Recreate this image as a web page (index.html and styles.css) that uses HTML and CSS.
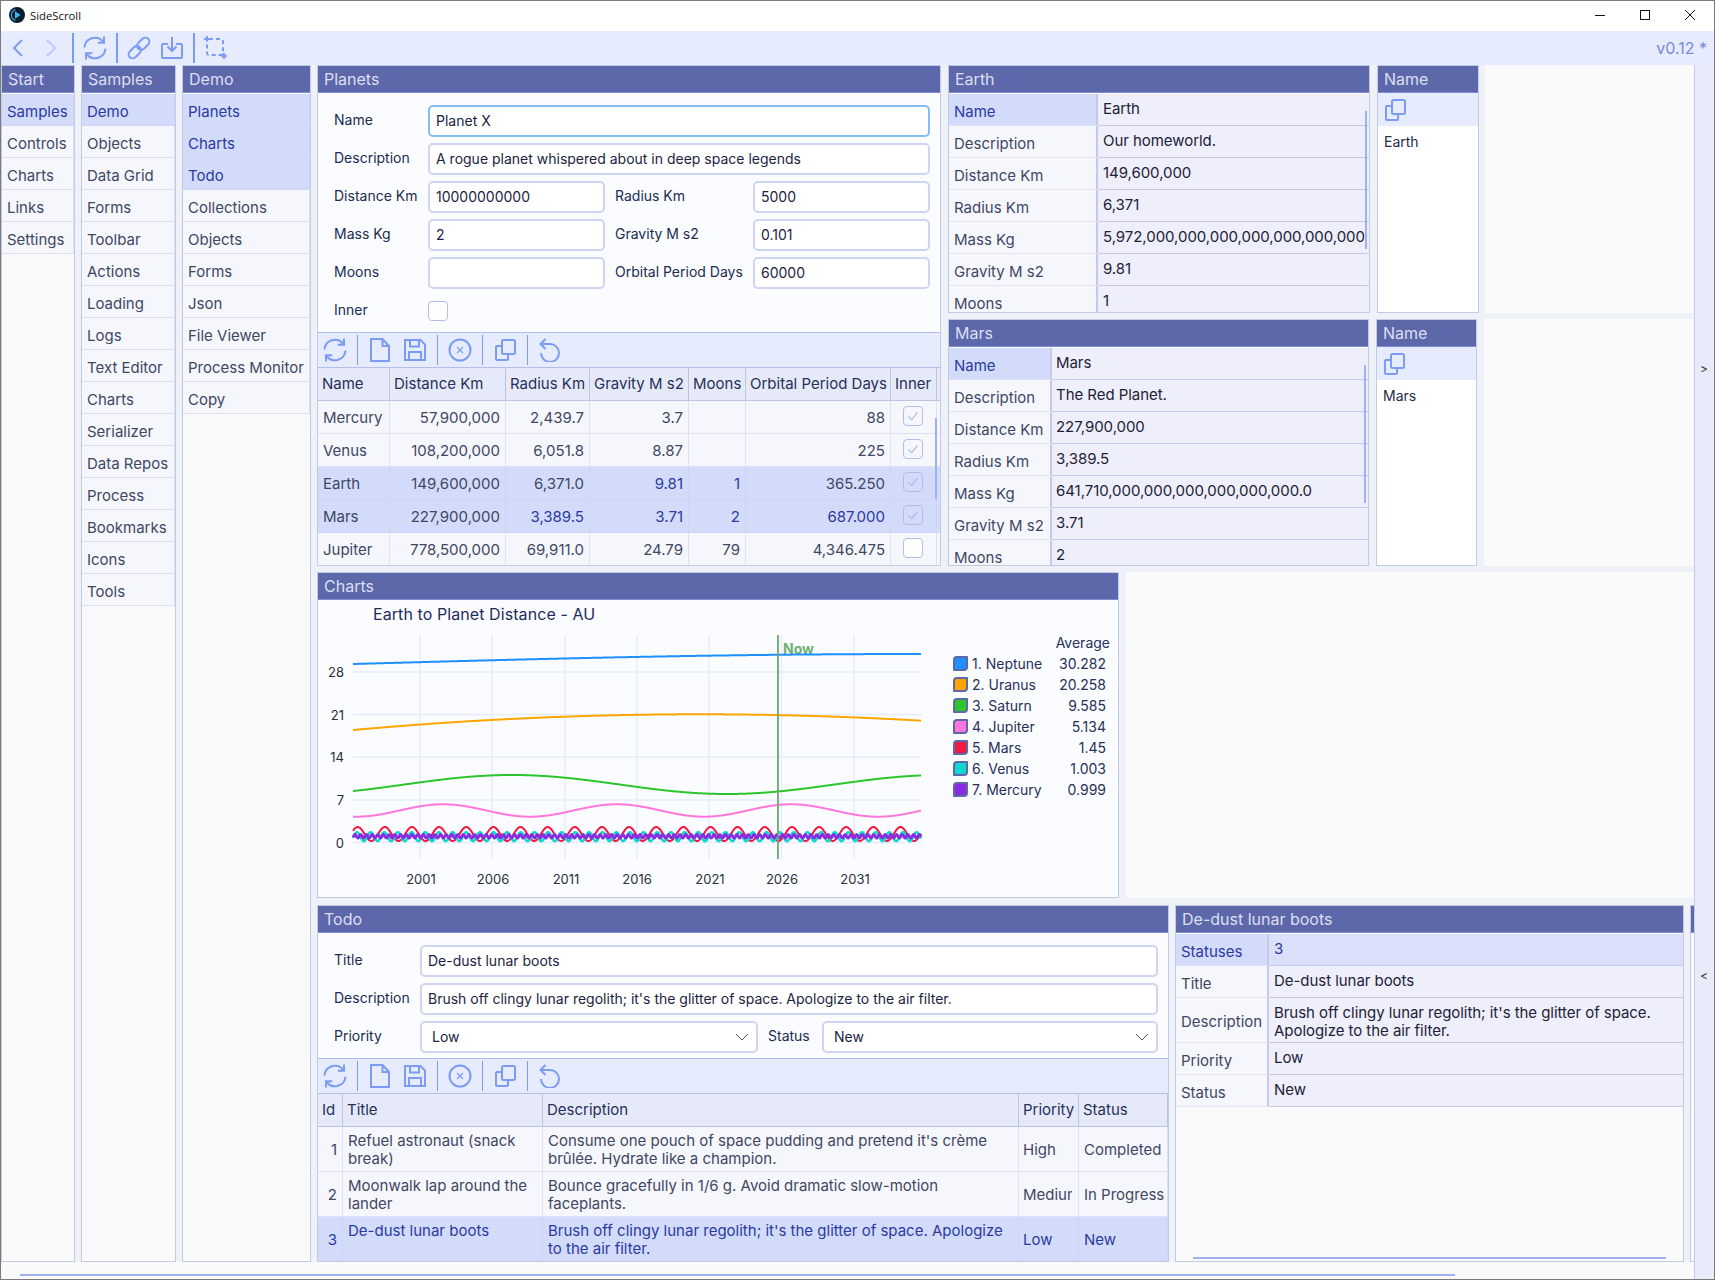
FILE: index.html
```html
<!DOCTYPE html>
<html lang="en">
<head>
<meta charset="utf-8">
<title>SideScroll</title>
<link rel="stylesheet" href="styles.css">
</head>
<body>
<svg class="defs" width="0" height="0" aria-hidden="true">
  <symbol id="i-back" viewBox="0 0 24 24"><path d="M16 4l-8 8 8 8"/></symbol>
  <symbol id="i-fwd" viewBox="0 0 24 24"><path d="M8 4l8 8-8 8"/></symbol>
  <symbol id="i-refresh" viewBox="0 0 24 24"><path d="M1.5 11.5A10.5 10.5 0 0 1 20 5.5M21 .5v6.200h-6.200M22.500 12.500A10.500 10.500 0 0 1 4 18.500M3 23.500v-6.200h6.200"/></symbol>
  <symbol id="i-link" viewBox="0 0 24 24"><g transform="rotate(-45 12 12)"><rect x="-1" y="8" width="14" height="8" rx="4"/><rect x="11" y="8" width="14" height="8" rx="4"/></g></symbol>
  <symbol id="i-down" viewBox="0 0 24 24"><path d="M8 8H3a1 1 0 0 0-1 1v12a1 1 0 0 0 1 1h18a1 1 0 0 0 1-1V9a1 1 0 0 0-1-1h-5M12 1v14M7.500 10.500l4.500 4.500 4.500-4.500"/></symbol>
  <symbol id="i-crop" viewBox="0 0 24 24"><rect x="3" y="3" width="16" height="16" rx="2" stroke-dasharray="4 3"/><path d="M0 3h3M3 0v3M20 17v6M17 20h6"/></symbol>
  <symbol id="i-file" viewBox="0 0 24 24"><path d="M3 1h11.500L21 8v15H3zM14.500 1v7H21"/></symbol>
  <symbol id="i-save" viewBox="0 0 24 24"><path d="M2 2h15.500L22 6.500V22H2zM7 2v6.500h9V2M6 22v-8h12v8"/></symbol>
  <symbol id="i-cancel" viewBox="0 0 24 24"><circle cx="12" cy="12" r="10.500"/><path class="thin" d="M9 9l6 6M15 9l-6 6"/></symbol>
  <symbol id="i-copy" viewBox="0 0 24 24"><rect x="9" y="2" width="13" height="14" rx="1.500"/><path d="M9 8H4a1 1 0 0 0-1 1v12a1 1 0 0 0 1 1h10a1 1 0 0 0 1-1v-5"/></symbol>
  <symbol id="i-undo" viewBox="0 0 24 24"><path d="M7.500 1L2.500 6l5 5M2.500 6H12a9 9 0 1 1-9 9"/></symbol>
  <symbol id="i-check" viewBox="0 0 20 20"><path d="M5 10.500l3.500 3.500L15 6"/></symbol>
  <symbol id="i-chev" viewBox="0 0 14 8"><path d="M1 1l6 6 6-6"/></symbol>
</svg>

<div class="window">
  <header class="titlebar">
    <svg class="logo" viewBox="0 0 16 16"><circle cx="8" cy="8" r="8" fill="#0b1d2d"/><path d="M6.500 2.600a5.600 5.600 0 0 0 0 10.800" fill="none" stroke="#2a9ad8" stroke-width="1.300"/><path d="M6 4.300l5.600 3.700L6 11.700z" fill="#3db4ee"/></svg>
    <span class="app-name">SideScroll</span>
    <div class="win-ctl">
      <svg viewBox="0 0 10 10"><path d="M0 5.500h10"/></svg>
      <svg viewBox="0 0 10 10"><rect x=".5" y=".5" width="9" height="9"/></svg>
      <svg viewBox="0 0 10 10"><path d="M0 0l10 10M10 0L0 10"/></svg>
    </div>
  </header>

  <nav class="toolbar top-bar">
    <svg class="ic"><use href="#i-back"/></svg>
    <svg class="ic faint"><use href="#i-fwd"/></svg>
    <i class="sep tall"></i>
    <svg class="ic"><use href="#i-refresh"/></svg>
    <i class="sep tall"></i>
    <svg class="ic"><use href="#i-link"/></svg>
    <svg class="ic"><use href="#i-down"/></svg>
    <i class="sep tall"></i>
    <svg class="ic"><use href="#i-crop"/></svg>
    <span class="version">v0.12 *</span>
  </nav>

  <div class="body">
    <div class="workspace">
      <div class="content">
        <section class="panel col-start">
          <h2 class="head">Start</h2>
          <ul class="list">
            <li class="sel">Samples</li><li>Controls</li><li>Charts</li><li>Links</li><li>Settings</li>
          </ul>
        </section>
        <section class="panel col-samples">
          <h2 class="head">Samples</h2>
          <ul class="list">
            <li class="sel">Demo</li><li>Objects</li><li>Data Grid</li><li>Forms</li><li>Toolbar</li><li>Actions</li><li>Loading</li><li>Logs</li><li>Text Editor</li><li>Charts</li><li>Serializer</li><li>Data Repos</li><li>Process</li><li>Bookmarks</li><li>Icons</li><li>Tools</li>
          </ul>
        </section>
        <section class="panel col-demo">
          <h2 class="head">Demo</h2>
          <ul class="list">
            <li class="sel">Planets</li><li class="sel">Charts</li><li class="sel">Todo</li><li>Collections</li><li>Objects</li><li>Forms</li><li>Json</li><li>File Viewer</li><li>Process Monitor</li><li>Copy</li>
          </ul>
        </section>

        <div class="stage">
          <div class="stage-row row-top">
            <section class="panel planets">
              <h2 class="head">Planets</h2>
              <form class="form form-planets">
                <label>Name</label><input class="wide focus" value="Planet X">
                <label>Description</label><input class="wide" value="A rogue planet whispered about in deep space legends">
                <label>Distance Km</label><input value="10000000000">
                <label class="second">Radius Km</label><input value="5000">
                <label>Mass Kg</label><input value="2">
                <label class="second">Gravity M s2</label><input value="0.101">
                <label>Moons</label><input value="">
                <label class="second">Orbital Period Days</label><input value="60000">
                <label>Inner</label><span class="box"></span>
              </form>
              <div class="toolbar sub-bar">
                <svg class="ic"><use href="#i-refresh"/></svg><i class="sep"></i>
                <svg class="ic"><use href="#i-file"/></svg><svg class="ic next"><use href="#i-save"/></svg><i class="sep"></i>
                <svg class="ic"><use href="#i-cancel"/></svg><i class="sep"></i>
                <svg class="ic"><use href="#i-copy"/></svg><i class="sep"></i>
                <svg class="ic"><use href="#i-undo"/></svg>
              </div>
              <div class="grid">
                <div class="tr th pt"><span>Name</span><span>Distance Km</span><span>Radius Km</span><span>Gravity M s2</span><span>Moons</span><span>Orbital Period Days</span><span>Inner</span><span></span></div>
                <div class="tr pt"><span>Mercury</span><span class="n">57,900,000</span><span class="n">2,439.7</span><span class="n">3.7</span><span class="n"></span><span class="n">88</span><span class="c"><b class="box on"><svg class="tick"><use href="#i-check"/></svg></b></span><span></span></div>
                <div class="tr pt"><span>Venus</span><span class="n">108,200,000</span><span class="n">6,051.8</span><span class="n">8.87</span><span class="n"></span><span class="n">225</span><span class="c"><b class="box on"><svg class="tick"><use href="#i-check"/></svg></b></span><span></span></div>
                <div class="tr pt sel"><span>Earth</span><span class="n">149,600,000</span><span class="n">6,371.0</span><span class="n hl">9.81</span><span class="n hl">1</span><span class="n">365.250</span><span class="c"><b class="box on"><svg class="tick"><use href="#i-check"/></svg></b></span><span></span></div>
                <div class="tr pt sel"><span>Mars</span><span class="n">227,900,000</span><span class="n hl">3,389.5</span><span class="n hl">3.71</span><span class="n hl">2</span><span class="n hl">687.000</span><span class="c"><b class="box on"><svg class="tick"><use href="#i-check"/></svg></b></span><span></span></div>
                <div class="tr pt"><span>Jupiter</span><span class="n">778,500,000</span><span class="n">69,911.0</span><span class="n">24.79</span><span class="n">79</span><span class="n">4,346.475</span><span class="c"><b class="box"></b></span><span></span></div>
                <i class="vbar vbar-planets"></i>
              </div>
            </section>

            <div class="details">
              <div class="stage-row row-earth">
                <section class="panel kv-panel earth">
                  <h2 class="head">Earth</h2>
                  <div class="kv"><span class="k sel">Name</span><span class="v">Earth</span></div>
                  <div class="kv"><span class="k">Description</span><span class="v">Our homeworld.</span></div>
                  <div class="kv"><span class="k">Distance Km</span><span class="v">149,600,000</span></div>
                  <div class="kv"><span class="k">Radius Km</span><span class="v">6,371</span></div>
                  <div class="kv"><span class="k">Mass Kg</span><span class="v">5,972,000,000,000,000,000,000,000</span></div>
                  <div class="kv"><span class="k">Gravity M s2</span><span class="v">9.81</span></div>
                  <div class="kv"><span class="k">Moons</span><span class="v">1</span></div>
                  <i class="vbar vbar-earth"></i>
                </section>
                <section class="panel name-panel">
                  <h2 class="head">Name</h2>
                  <div class="name-bar"><svg class="ic"><use href="#i-copy"/></svg></div>
                  <p class="name-val">Earth</p>
                </section>
                <div class="panel blank"></div>
              </div>
              <div class="stage-row row-mars">
                <section class="panel kv-panel mars">
                  <h2 class="head">Mars</h2>
                  <div class="kv"><span class="k sel">Name</span><span class="v">Mars</span></div>
                  <div class="kv"><span class="k">Description</span><span class="v">The Red Planet.</span></div>
                  <div class="kv"><span class="k">Distance Km</span><span class="v">227,900,000</span></div>
                  <div class="kv"><span class="k">Radius Km</span><span class="v">3,389.5</span></div>
                  <div class="kv"><span class="k">Mass Kg</span><span class="v">641,710,000,000,000,000,000,000.0</span></div>
                  <div class="kv"><span class="k">Gravity M s2</span><span class="v">3.71</span></div>
                  <div class="kv"><span class="k">Moons</span><span class="v">2</span></div>
                  <i class="vbar vbar-mars"></i>
                </section>
                <section class="panel name-panel">
                  <h2 class="head">Name</h2>
                  <div class="name-bar"><svg class="ic"><use href="#i-copy"/></svg></div>
                  <p class="name-val">Mars</p>
                </section>
                <div class="panel blank"></div>
              </div>
            </div>
          </div>

          <div class="stage-row row-chart">
            <section class="panel chart-panel">
              <h2 class="head">Charts</h2>
              <div class="chart-body">
                <svg class="plot" viewBox="318 600 634 298" width="634" height="298">
                  <text class="chart-title" x="373" y="620">Earth to Planet Distance - AU</text>
                  <g class="gridlines">
                    <path d="M353 672h568M353 714.500h568M353 757h568M353 800h568M353 842.500h568"/>
                    <path d="M420 635v224M492 635v224M565 635v224M637 635v224M709 635v224M781.500 635v224M854 635v224"/>
                  </g>
                  <g class="ticks ticks-y">
                    <text x="344" y="677">28</text><text x="344" y="720">21</text><text x="344" y="762">14</text><text x="344" y="805">7</text><text x="344" y="848">0</text>
                  </g>
                  <g class="ticks ticks-x">
                    <text x="421" y="884">2001</text><text x="493" y="884">2006</text><text x="566" y="884">2011</text><text x="637" y="884">2016</text><text x="710" y="884">2021</text><text x="782" y="884">2026</text><text x="855" y="884">2031</text>
                  </g>
                  <text class="now-label" x="783" y="654">Now</text>
                  <g id="series" class="series"></g>
                  <path class="now-line" d="M778 635v224"/>
                </svg>
                <div class="legend">
                  <div class="lg-head">Average</div>
                  <div class="lg-row"><i class="sw s-neptune"></i><span class="lg-name">1. Neptune</span><span>30.282</span></div>
                  <div class="lg-row"><i class="sw s-uranus"></i><span class="lg-name">2. Uranus</span><span>20.258</span></div>
                  <div class="lg-row"><i class="sw s-saturn"></i><span class="lg-name">3. Saturn</span><span>9.585</span></div>
                  <div class="lg-row"><i class="sw s-jupiter"></i><span class="lg-name">4. Jupiter</span><span>5.134</span></div>
                  <div class="lg-row"><i class="sw s-mars"></i><span class="lg-name">5. Mars</span><span>1.45</span></div>
                  <div class="lg-row"><i class="sw s-venus"></i><span class="lg-name">6. Venus</span><span>1.003</span></div>
                  <div class="lg-row"><i class="sw s-mercury"></i><span class="lg-name">7. Mercury</span><span>0.999</span></div>
                </div>
              </div>
            </section>
            <div class="panel blank"></div>
          </div>

          <div class="stage-row row-todo">
            <section class="panel todo">
              <h2 class="head">Todo</h2>
              <form class="form form-todo">
                <label>Title</label><input class="wide" value="De-dust lunar boots">
                <label>Description</label><input class="wide" value="Brush off clingy lunar regolith; it's the glitter of space. Apologize to the air filter.">
                <label>Priority</label><div class="select"><span>Low</span><svg class="chev"><use href="#i-chev"/></svg></div>
                <label class="second">Status</label><div class="select"><span>New</span><svg class="chev"><use href="#i-chev"/></svg></div>
              </form>
              <div class="toolbar sub-bar">
                <svg class="ic"><use href="#i-refresh"/></svg><i class="sep"></i>
                <svg class="ic"><use href="#i-file"/></svg><svg class="ic next"><use href="#i-save"/></svg><i class="sep"></i>
                <svg class="ic"><use href="#i-cancel"/></svg><i class="sep"></i>
                <svg class="ic"><use href="#i-copy"/></svg><i class="sep"></i>
                <svg class="ic"><use href="#i-undo"/></svg>
              </div>
              <div class="grid">
                <div class="tr th td-cols"><span>Id</span><span>Title</span><span>Description</span><span>Priority</span><span>Status</span></div>
                <div class="tr td-cols tall-row"><span class="n mid">1</span><span class="wrap">Refuel astronaut (snack break)</span><span class="wrap">Consume one pouch of space pudding and pretend it's crème brûlée. Hydrate like a champion.</span><span class="mid">High</span><span class="mid">Completed</span></div>
                <div class="tr td-cols tall-row"><span class="n mid">2</span><span class="wrap">Moonwalk lap around the lander</span><span class="wrap">Bounce gracefully in 1/6 g. Avoid dramatic slow-motion faceplants.</span><span class="mid"><em class="clip">Medium</em></span><span class="mid">In Progress</span></div>
                <div class="tr td-cols tall-row last sel all-blue"><span class="n mid">3</span><span class="wrap">De-dust lunar boots</span><span class="wrap">Brush off clingy lunar regolith; it's the glitter of space. Apologize to the air filter.</span><span class="mid">Low</span><span class="mid">New</span></div>
              </div>
            </section>
            <section class="panel kv-panel detail">
              <h2 class="head">De-dust lunar boots</h2>
              <div class="kv kv-sel"><span class="k sel">Statuses</span><span class="v">3</span></div>
              <div class="kv"><span class="k">Title</span><span class="v">De-dust lunar boots</span></div>
              <div class="kv kv-tall"><span class="k">Description</span><span class="v">Brush off clingy lunar regolith; it's the glitter of space. Apologize to the air filter.</span></div>
              <div class="kv"><span class="k">Priority</span><span class="v">Low</span></div>
              <div class="kv"><span class="k">Status</span><span class="v">New</span></div>
              <i class="hbar hbar-detail"></i>
            </section>
            <div class="panel sliver"><div class="head"></div></div>
          </div>
        </div>
      </div>
      <div class="hscroll"><i class="hbar hbar-main"></i></div>
    </div>
    <aside class="strip">
      <div class="strip-btn">&gt;</div>
      <div class="strip-btn">&lt;</div>
    </aside>
  </div>
</div>
<script src="chart.js"></script>
</body>
</html>
```

FILE: styles.css
```css
* { box-sizing: border-box; }
html, body { margin: 0; padding: 0; }
body {
  width: 1715px;
  height: 1280px;
  overflow: hidden;
  font-family: Inter, "Liberation Sans", sans-serif;
  font-size: 15px;
  color: #3f4763;
  background: #eef2f8;
}
.defs { position: absolute; }
h2, ul, p { margin: 0; padding: 0; font: inherit; }
li { list-style: none; }

.window {
  width: 1715px;
  height: 1280px;
  display: flex;
  flex-direction: column;
  border: 1px solid #7a7a7a;
  overflow: hidden;
}

/* Title bar */
.titlebar {
  height: 30px;
  flex: none;
  display: flex;
  align-items: center;
  background: #fff;
  padding: 0 0 2px 8px;
}
.logo { width: 16px; height: 16px; }
.app-name {
  margin-left: 5px;
  font-family: "Open Sans", "Liberation Sans", sans-serif;
  font-size: 11.300px;
  color: #111;
}
.win-ctl { margin-left: auto; display: flex; gap: 35px; padding-right: 19px; }
.win-ctl svg { width: 10px; height: 10px; fill: none; stroke: #111; stroke-width: 1; }

/* Toolbars */
.toolbar { display: flex; align-items: center; background: #e6ecfd; }
.ic { width: 24px; height: 24px; flex: none; fill: none; stroke: #7b9bf4; stroke-width: 2; }
.thin { stroke-width: 1.200; }
.faint { stroke: #b9c8f8; }
.sep { width: 1px; height: 30px; flex: none; margin: 0 10px; background: #7b9bf4; }
.top-bar { height: 34px; flex: none; padding-left: 5px; }
.top-bar .ic { margin-right: 9px; }
.top-bar .sep { margin: 0 9px 0 0; width: 2px; }
.version { margin-left: auto; padding-right: 7px; font-size: 16px; color: #7a89dc; }
.sub-bar {
  height: 36px;
  flex: none;
  padding-left: 5px;
  border-top: 1px solid #aebcf0;
  border-bottom: 1px solid #b4bde4;
}
.next { margin-left: 11px; }

/* Workspace */
.body { flex: 1; min-height: 0; display: flex; }
.workspace { width: 1693px; display: flex; flex-direction: column; }
.content { height: 1197px; flex: none; display: flex; gap: 6px; }
.hscroll { flex: 1; background: #fafafa; position: relative; }
.strip {
  flex: 1;
  display: flex;
  flex-direction: column;
  background: #e8ebfa;
  border-left: 1px solid #c5cbe6;
}
.strip-btn {
  flex: 1;
  display: flex;
  align-items: center;
  justify-content: center;
  padding-right: 1px;
  font-size: 12px;
  color: #333;
}

/* Panels */
.panel {
  display: flex;
  flex-direction: column;
  position: relative;
  background: #fafafa;
  border: 1px solid #c2cae6;
  overflow: hidden;
}
.head {
  height: 27px;
  flex: none;
  padding: 0 6px;
  line-height: 26px;
  font-size: 16px;
  color: #dcdff2;
  background: #5d68ab;
  border-bottom: 1px solid #7f8dd6;
}
.col-start { width: 74px; }
.col-samples { width: 95px; }
.col-demo { width: 129px; }

.list { margin-top: 1px; }
.list li {
  height: 32px;
  line-height: 36px;
  padding-left: 5px;
  white-space: nowrap;
  background: #f5f7fc;
  border-bottom: 1px solid #dcdff0;
  border-right: 1px solid #dcdff0;
  overflow: hidden;
}
.list li.sel {
  background: #d2dcfa;
  color: #2b3aa0;
  border-color: #cdd6f6;
}

.stage { flex: none; width: 1377px; display: flex; flex-direction: column; }
.stage-row { display: flex; flex: none; }
.row-top { height: 501px; gap: 7px; }
.row-chart { height: 326px; margin-top: 6px; gap: 7px; }
.row-todo { height: 357px; margin-top: 7px; gap: 6px; }
.blank { flex: 1; min-width: 0; border: none; }

/* Forms */
.planets { width: 624px; background: #fbfcff; }
.form {
  flex: none;
  display: grid;
  align-items: center;
  row-gap: 6px;
  padding-top: 12px;
  font-size: 14px;
  color: #202c50;
}
.form-planets { height: 239px; grid-template-columns: 94px 177px 148px 177px; grid-auto-rows: 32px; padding-left: 16px; }
.form-todo { height: 125px; grid-template-columns: 86px 338px 64px 336px; grid-auto-rows: 32px; padding-left: 16px; }
.form label { display: block; padding-bottom: 4px; }
.form .second { padding-left: 10px; }
.form input, .select {
  width: 100%;
  height: 32px;
  margin: 0;
  padding: 0 6px 1px;
  font: inherit;
  color: #1b2340;
  background: #fff;
  border: 2px solid #d0d3f4;
  border-radius: 5px;
  outline: none;
}
.form .wide { grid-column: 2 / -1; }
.form .focus { border-color: #84bcf6; }
.select {
  display: flex;
  align-items: center;
  justify-content: space-between;
  padding: 0 7px 2px 10px;
}
.select .chev { margin-top: 2px; }
.chev { width: 14px; height: 8px; fill: none; stroke: #4a5270; stroke-width: 1; }
.box {
  display: block;
  width: 20px;
  height: 20px;
  background: #fff;
  border: 1px solid #b4bcee;
  border-radius: 4px;
}
.box.on { background: transparent; display: flex; align-items: center; justify-content: center; }
.tick { width: 18px; height: 18px; fill: none; stroke: #a9b6ee; stroke-width: 1.200; }

/* Tables */
.grid { position: relative; flex: 1; background: #fafafa; overflow: hidden; }
.tr {
  display: grid;
  height: 33px;
  align-items: stretch;
  background: #f6f7fc;
  border-bottom: 1px solid #dde1f3;
}
.tr > span {
  display: flex;
  align-items: center;
  padding: 1px 5px 0;
  white-space: nowrap;
  overflow: hidden;
  border-right: 1px solid #dde1f3;
}
.tr.sel { background: #d2dcfa; border-bottom-color: #ccd5f5; }
.tr.sel > span { border-right-color: #ccd5f5; }
.tr.sel > .hl, .all-blue > span { color: #2b3aa0; }
.th { height: 33px; background: #e6eaf8; border-bottom: 1px solid #bcc4e4; }
.tr.th > span { padding: 0 4px 2px; color: #26305a; border-right: 1px solid #bcc4e4; }
.n { justify-content: flex-end; }
.tr > .c { justify-content: center; padding: 0 7px 3px 5px; }
.pt { grid-template-columns: 72px 116px 84px 99px 57px 145px 46px 3px; }
.pt > .n { padding-right: 5px; }
.td-cols { grid-template-columns: 25px 200px 476px 60px 89px; }
.tall-row { height: 45px; }
.tall-row.last { height: 46px; border-bottom: 1px solid #b8c2e6; }
.tall-row > .wrap { display: block; white-space: normal; line-height: 18px; padding: 5px 6px 0 5px; }
.tall-row > .mid { padding-top: 1px; }
.tall-row.last > .mid { padding-top: 0; padding-bottom: 1px; }
.tall-row > span:nth-child(n+4) { padding-left: 4px; padding-right: 0; }
.tall-row > span:nth-child(5) { padding-left: 5px; }
.clip { display: block; width: 49px; overflow: hidden; font-style: normal; }
.vbar { position: absolute; width: 2px; background: #9fb0f5; }
.hbar { position: absolute; height: 2px; background: #9fb0f5; }
.vbar-planets { right: 3px; top: 50px; height: 81px; }
.vbar-earth { right: 2px; top: 45px; height: 138px; }
.vbar-mars { right: 2px; top: 45px; height: 138px; }
.hbar-detail { left: 17px; right: 17px; bottom: 2px; }
.hbar-main { left: 19px; width: 1435px; top: 12px; }

/* Key / value panels */
.kv-panel { background: #fafafa; }
.earth { width: 422px; }
.mars { width: 421px; }
.detail { width: 509px; }
.kv-panel .head { margin-bottom: 1px; }
.kv {
  display: grid;
  height: 32px;
  flex: none;
  border-bottom: 1px solid #c4c9ea;
}
.earth .kv { grid-template-columns: 149px 1fr; }
.mars .kv { grid-template-columns: 103px 1fr; }
.detail .kv { grid-template-columns: 93px 1fr; }
.kv-tall { height: 45px !important; }
.k {
  display: flex;
  align-items: center;
  padding: 3px 5px 0;
  white-space: nowrap;
  color: #3f4763;
  background: #f6f7fd;
  border-right: 2px solid #c4c9ea;
  box-shadow: 0 1px 0 #e0e3f5;
}
.k.sel { background: #d2dcfa; color: #2b3aa0; }
.v {
  padding: 6px 4px 0 5px;
  line-height: 18px;
  letter-spacing: -.05px;
  color: #1d2238;
  background: #eeeffa;
  white-space: normal;
}
.mars .v { padding-left: 4px; }
.kv-sel .v { background: #dadffa; color: #2b3aa0; }

.details { flex: none; width: 746px; display: flex; flex-direction: column; gap: 6px; }
.row-earth { height: 248px; gap: 7px; }
.row-mars { height: 247px; gap: 7px; }
.name-panel { width: 102px; background: #fff; }
.row-earth .blank { margin-left: -1px; }
.row-mars .name-panel { width: 101px; }
.name-bar { height: 33px; flex: none; display: flex; align-items: center; padding-left: 5px; background: #e6ecfd; }
.name-val { padding: 7px 0 0 6px; font-size: 14px; color: #252c48; }

/* Chart */
.chart-panel { width: 802px; background: #fbfcff; }
.chart-body { flex: 1; display: flex; }
.plot { flex: none; display: block; }
.chart-title { font-size: 16px; letter-spacing: .08px; fill: #1f2d5c; }
.gridlines path { fill: none; stroke: #e6ecfd; stroke-width: 1.500; }
.ticks text { font-size: 13px; fill: #2c2f3a; }
.ticks-y text { text-anchor: end; }
.ticks-x text { text-anchor: middle; }
.now-label { font-size: 14px; font-weight: 700; fill: #6fb070; }
.now-line { stroke: #6aa96a; stroke-width: 2; opacity: .9; }
.series polyline { fill: none; stroke-linejoin: round; }
.legend {
  flex: none;
  width: 157px;
  margin-left: 1px;
  padding-top: 32px;
  font-size: 14px;
  color: #283058;
}
.lg-head { height: 21px; line-height: 21px; text-align: right; }
.lg-row { height: 21px; display: flex; align-items: center; padding-right: 4px; }
.lg-name { flex: 1; margin-left: 4px; }
.sw { width: 15px; height: 15px; flex: none; border: 2px solid #5d68ab; border-radius: 4px 1px 4px 1px; }
.s-neptune { background: #1e90ff; }
.s-uranus { background: #ffa500; }
.s-saturn { background: #2cc52c; }
.s-jupiter { background: #ff77dd; }
.s-mars { background: #f2183f; }
.s-venus { background: #10d8d0; }
.s-mercury { background: #8a2be2; }

/* Todo */
.todo { width: 852px; background: #fbfcff; }
.sliver { flex: 1; min-width: 0; border-right: none; }
```

FILE: chart.js
```js
(function () {
  var NS = 'http://www.w3.org/2000/svg';
  var X0 = 353, X1 = 921, TAU = Math.PI * 2;
  var series = [
    { color: '#1e90ff', width: 2, fn: function (x) { return 664 - 10 * Math.sin((x - X0) / (X1 - X0) * Math.PI / 2); } },
    { color: '#ffa500', width: 2, fn: function (x) { return 714.3 + 16 * Math.pow((x - 700) / 350, 2); } },
    { color: '#2cc52c', width: 2, fn: function (x) { return 784.5 - 9.5 * Math.cos(TAU * (x - 512) / 430); } },
    { color: '#ff77dd', width: 2, fn: function (x) { return 810.5 - 6.2 * Math.cos(TAU * (x - 443) / 174); } },
    { color: '#f2183f', width: 2, fn: function (x) { return 834 - 7 * Math.cos(TAU * (x - 357.7) / 27.14); } },
    { color: '#10d8d0', width: 2.5, fn: function (x) { return 836.7 - 4.5 * Math.cos(TAU * (x - 357) / 13.65); } },
    { color: '#8a2be2', width: 2.8, fn: function (x) { return 836.3 - 1.8 * Math.cos(TAU * (x - 355) / 5.7); } }
  ];
  var host = document.getElementById('series');
  series.forEach(function (s) {
    var pts = [];
    for (var x = X0; x <= X1; x += 0.5) {
      pts.push(x + ',' + s.fn(x).toFixed(2));
    }
    var line = document.createElementNS(NS, 'polyline');
    line.setAttribute('points', pts.join(' '));
    line.setAttribute('stroke', s.color);
    line.setAttribute('stroke-width', s.width);
    host.appendChild(line);
  });
})();
```
